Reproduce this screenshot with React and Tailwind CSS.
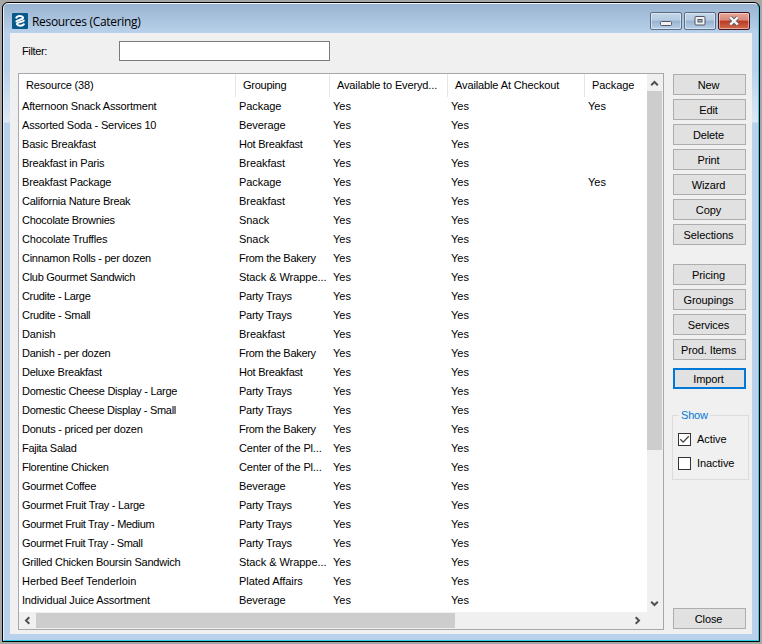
import React from "react";

// Each row: resource name, its tracking in px, grouping, packaged flag.
const ROWS = [
  ["Afternoon Snack Assortment", -0.19, "Package", "Yes"],
  ["Assorted Soda - Services 10", -0.19, "Beverage"],
  ["Basic Breakfast", -0.17, "Hot Breakfast"],
  ["Breakfast in Paris", -0.22, "Breakfast"],
  ["Breakfast Package", -0.18, "Package", "Yes"],
  ["California Nature Break", -0.26, "Breakfast"],
  ["Chocolate Brownies", -0.28, "Snack"],
  ["Chocolate Truffles", -0.18, "Snack"],
  ["Cinnamon Rolls - per dozen", -0.29, "From the Bakery"],
  ["Club Gourmet Sandwich", -0.29, "Stack & Wrappe..."],
  ["Crudite - Large", -0.33, "Party Trays"],
  ["Crudite - Small", -0.3, "Party Trays"],
  ["Danish", -0.1, "Breakfast"],
  ["Danish - per dozen", -0.25, "From the Bakery"],
  ["Deluxe Breakfast", -0.25, "Hot Breakfast"],
  ["Domestic Cheese Display - Large", -0.28, "Party Trays"],
  ["Domestic Cheese Display - Small", -0.3, "Party Trays"],
  ["Donuts - priced per dozen", -0.24, "From the Bakery"],
  ["Fajita Salad", -0.3, "Center of the Pl..."],
  ["Florentine Chicken", -0.28, "Center of the Pl..."],
  ["Gourmet Coffee", -0.29, "Beverage"],
  ["Gourmet Fruit Tray - Large", -0.29, "Party Trays"],
  ["Gourmet Fruit Tray - Medium", -0.33, "Party Trays"],
  ["Gourmet Fruit Tray - Small", -0.35, "Party Trays"],
  ["Grilled Chicken Boursin Sandwich", -0.23, "Stack & Wrappe..."],
  ["Herbed Beef Tenderloin", -0.05, "Plated Affairs"],
  ["Individual Juice Assortment", -0.2, "Beverage"],
];

const GROUP_TRACKING = {
  "Hot Breakfast": -0.23,
  "From the Bakery": -0.3,
  "Party Trays": -0.27,
  "Center of the Pl...": -0.16,
};

const HEADERS = [
  ["Resource (38)", -0.17],
  ["Grouping", -0.25],
  ["Available to Everyd...", -0.14],
  ["Available At Checkout", -0.12],
  ["Package", -0.06],
];

const COLS = "grid grid-cols-[217px_94px_118px_137px_62px]";

function Button({ children, focus }) {
  return (
    <button
      className={
        "flex h-[21px] w-[73px] shrink-0 items-center justify-center bg-[#e1e1e1] pr-[2px] pt-px tracking-[-0.1px] " +
        (focus ? "border-2 border-[#0078d7]" : "border border-[#adadad]")
      }
    >
      {children}
    </button>
  );
}

function Arrow({ className }) {
  return (
    <svg className={className} width="9" height="9" viewBox="0 0 9 9" fill="none" stroke="#505050" strokeWidth="2">
      <path d="M1.2 6.3 4.5 3l3.3 3.3" />
    </svg>
  );
}

function CaptionButton({ close, children }) {
  return (
    <div
      className={
        "flex h-[18px] w-8 items-center justify-center rounded-[2px] border shadow-[inset_0_0_0_1px_rgba(255,255,255,0.45)] " +
        (close
          ? "border-[#431422] bg-[linear-gradient(#e6a597_0%,#d98a7a_45%,#b83a22_50%,#d16a4d_100%)]"
          : "border-[#5b6d85] bg-[linear-gradient(#c3d5e9_0%,#b6cbe2_45%,#98b3d0_50%,#b7cfe8_100%)]")
      }
    >
      {children}
    </div>
  );
}

function Check({ label, checked }) {
  return (
    <label className="flex h-[13px] items-center">
      <span className="flex size-[13px] items-center justify-center border border-[#333] bg-white">
        {checked && (
          <svg width="11" height="11" viewBox="0 0 11 11" fill="none" stroke="#404040" strokeWidth="1.3">
            <path d="M1.3 5.3 4.1 8.1 9.8 2.3" />
          </svg>
        )}
      </span>
      <span className="ml-[6px] tracking-[-0.06px]">{label}</span>
    </label>
  );
}

export default function App() {
  return (
    <div className="h-[644px] w-[762px] overflow-hidden bg-[#a7a7a7] pl-[2px] pt-[2px] font-['Liberation_Sans',Arial,sans-serif] text-[11px] leading-[13px] text-black">
      <div className="h-[640px] w-[758px] rounded-t-[6px] border border-black bg-black">
        <div className="flex h-full flex-col rounded-t-[5px] border border-b-[#25cfe8] border-l-[#e5f0f8] border-r-[#35cdf0] border-t-[#f4f8fc] bg-[linear-gradient(#99b4d1_0px,#b9d1ea_29px,#b9d1ea_65px,#dce9f6_118px,#b9d1ea_119px)] px-[6px] pb-[6px]">
          <header className="flex h-[29px] shrink-0 items-start pl-[2px]">
            <svg className="mt-[9px]" width="16" height="16" viewBox="0 0 16 16">
              <rect width="16" height="16" rx="1" fill="#07598c" />
              <g fill="none" stroke="#fff" strokeWidth="2" strokeLinecap="round" strokeLinejoin="round">
                <path d="M4.3 4.6C5.8 2.6 9.6 2.4 11 4.4 11.7 6.6 6.2 6.5 4.4 8.4" />
                <path d="M11.8 7.6C9.8 9.5 4.6 9 5 11.3c1.4 2 5.4 1.9 6.9-.1" />
              </g>
            </svg>
            <h1 className="ml-[4px] mt-[9px] font-['Open_Sans','Noto_Sans',sans-serif] text-[12px] leading-[17px] tracking-[-0.32px]">Resources (Catering)</h1>
            <div className="ml-auto mr-[2px] mt-[8px] flex gap-[2px]">
              <CaptionButton>
                <svg width="12" height="6" viewBox="0 0 12 6" className="mt-[3px]">
                  <rect x=".5" y="1.5" width="11" height="4" rx="1" fill="#f2f2f2" stroke="#535666" />
                </svg>
              </CaptionButton>
              <CaptionButton>
                <svg width="12" height="10" viewBox="0 0 12 10">
                  <rect x="1" y=".5" width="10" height="8.5" rx="1" fill="#f2f2f2" stroke="#535666" />
                  <rect x="4" y="3.5" width="4" height="2.5" fill="#9bb5d2" stroke="#535666" />
                </svg>
              </CaptionButton>
              <CaptionButton close>
                <svg width="12" height="10" viewBox="0 0 12 10">
                  <path d="M2.4 1.5 9.6 8.5M9.6 1.5 2.4 8.5" stroke="#535666" strokeWidth="4" />
                  <path d="M2.2 1.3 9.8 8.7M9.8 1.3 2.2 8.7" stroke="#f5f5f5" strokeWidth="2.4" />
                </svg>
              </CaptionButton>
            </div>
          </header>

          <main className="flex min-h-0 flex-1 flex-col bg-[#f0f0f0]">
            <div className="flex h-10 shrink-0 items-start pl-3 pt-2">
              <span className="mt-[4px] w-[97px] tracking-[-0.35px]">Filter:</span>
              <div className="h-5 w-[211px] border border-[#7a7a7a] bg-white" />
            </div>
            <div className="flex min-h-0 flex-1 pl-2">
              <section className="flex h-[557px] w-[646px] flex-col border border-[#a6a8ae] bg-[#f0f0f0]">
                <div className="flex h-[538px] shrink-0">
                  <div className="w-[628px] overflow-hidden bg-white">
                    <div className={COLS + " h-[23px] leading-[23px]"}>
                      {HEADERS.map(([h, tracking], i) => (
                        <div
                          key={h}
                          className={"whitespace-nowrap pl-[7px] " + (i < 4 ? "border-r border-[#e5e5e5]" : "")}
                          style={{ letterSpacing: tracking }}
                        >
                          {h}
                        </div>
                      ))}
                    </div>
                    {ROWS.map(([name, tracking, group, pack]) => (
                      <div key={name} className={COLS + " h-[19px] whitespace-nowrap leading-[19px]"}>
                        <div className="pl-[3px]" style={{ letterSpacing: tracking }}>{name}</div>
                        <div className="pl-[3px]" style={{ letterSpacing: GROUP_TRACKING[group] ?? -0.06 }}>{group}</div>
                        <div className="pl-[3px]">Yes</div>
                        <div className="pl-[3px]">Yes</div>
                        <div className="pl-[3px]">{pack}</div>
                      </div>
                    ))}
                  </div>
                  <div className="flex w-[15px] flex-col items-center">
                    <div className="flex h-[17px] items-center pt-px"><Arrow /></div>
                    <div className="h-[359px] w-[15px] bg-[#cdcdcd]" />
                    <div className="mt-auto flex h-[17px] items-center"><Arrow className="rotate-180" /></div>
                  </div>
                </div>
                <div className="mt-px flex h-[15px] items-center">
                  <div className="flex w-[17px] justify-center"><Arrow className="-rotate-90" /></div>
                  <div className="h-[15px] w-[419px] bg-[#cdcdcd]" />
                  <div className="ml-auto mr-[17px] flex w-[17px] justify-center"><Arrow className="rotate-90" /></div>
                </div>
              </section>

              <aside className="ml-2 flex w-[77px] flex-col pl-px pt-px">
                <div className="flex flex-col gap-1">
                  {["New", "Edit", "Delete", "Print", "Wizard", "Copy", "Selections"].map((b) => <Button key={b}>{b}</Button>)}
                </div>
                <div className="mt-[19px] flex flex-col gap-1">
                  {["Pricing", "Groupings", "Services", "Prod. Items"].map((b) => <Button key={b}>{b}</Button>)}
                </div>
                <div className="mt-2"><Button focus>Import</Button></div>
                <fieldset className="-ml-px mt-[20px] h-[71px] w-[77px] border border-[#dcdcdc] pl-[5px]">
                  <legend className="ml-[1px] px-[2px] tracking-[-0.2px] text-[#0078d7]">Show</legend>
                  <div className="flex flex-col gap-[11px] pt-[11px]">
                    <Check label="Active" checked />
                    <Check label="Inactive" />
                  </div>
                </fieldset>
                <div className="mb-[5px] mt-auto"><Button>Close</Button></div>
              </aside>
            </div>
          </main>
        </div>
      </div>
    </div>
  );
}
